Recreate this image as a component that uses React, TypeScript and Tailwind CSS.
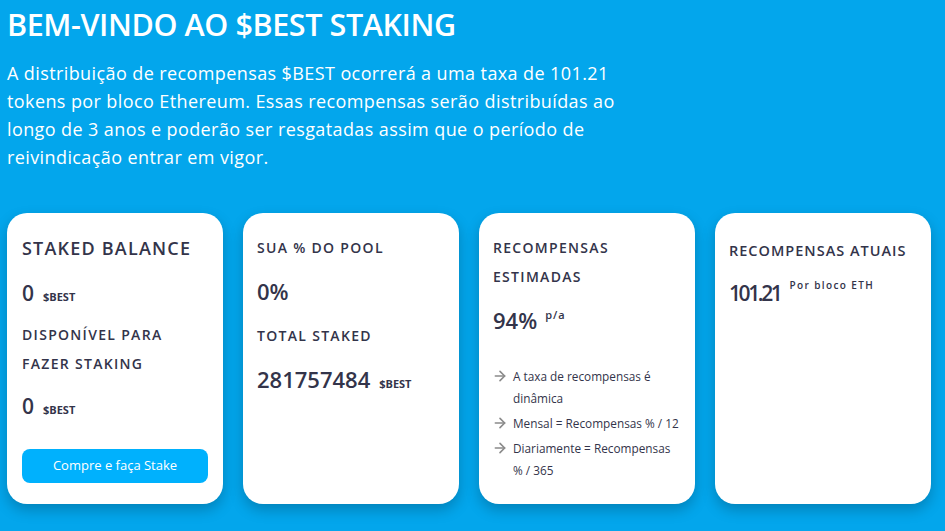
import React from "react";
import { ArrowRight } from "lucide-react";

const font = { fontFamily: '"Open Sans", "Noto Sans", sans-serif' };

function Best({ className = "" }: { className?: string }) {
  return <span className={"text-[11px] font-bold " + className}>$BEST</span>;
}

function Item({ children }: { children: React.ReactNode }) {
  return (
    <li className="flex items-start gap-[5px]">
      <ArrowRight className="mt-[3px] -ml-[1px] shrink-0 text-[#8a8a8a]" size={16} strokeWidth={2.4} />
      <span className="whitespace-nowrap">{children}</span>
    </li>
  );
}

export default function App() {
  return (
    <div
      className="w-[945px] h-[531px] overflow-hidden bg-[#03a6ec] px-[7px] text-white"
      style={font}
    >
      <h1 className="pt-[4px] text-[30.5px] leading-[40px] font-semibold tracking-[-0.4px]">
        BEM-VINDO AO $BEST STAKING
      </h1>
      <p className="mt-[15px] text-[18px] leading-[28px] tracking-[0.4px]">
        A distribuição de recompensas $BEST ocorrerá a uma taxa de 101.21
        <br />
        tokens por bloco Ethereum. Essas recompensas serão distribuídas ao
        <br />
        longo de 3 anos e poderão ser resgatadas assim que o período de
        <br />
        reivindicação entrar em vigor.
      </p>

      <div className="mt-[42px] flex gap-[20px] text-[#33344a]">
        {/* Card 1 */}
        <div className="w-[216px] h-[291px] shrink-0 rounded-[20px] bg-white px-[15px] pt-[21px] shadow-[0_6px_14px_rgba(0,0,0,0.22)] flex flex-col">
          <h3 className="text-[18px] leading-[29px] font-semibold tracking-[1.2px]">STAKED BALANCE</h3>
          <div className="mt-[16px] flex items-baseline leading-[29px]">
            <span className="text-[21px] font-semibold">0</span>
            <Best className="ml-[9px]" />
          </div>
          <h4 className="mt-[9px] text-[14px] leading-[29px] font-semibold tracking-[1.3px]">
            DISPONÍVEL PARA
            <br />
            FAZER STAKING
          </h4>
          <div className="mt-[14px] flex items-baseline leading-[29px]">
            <span className="text-[21px] font-semibold">0</span>
            <Best className="ml-[9px]" />
          </div>
          <button className="mt-[25px] h-[34px] w-full rounded-[8px] bg-[#00b1fd] text-[13px] text-white">
            Compre e faça Stake
          </button>
        </div>

        {/* Card 2 */}
        <div className="w-[216px] h-[291px] shrink-0 rounded-[20px] bg-white px-[14px] pt-[20px] shadow-[0_6px_14px_rgba(0,0,0,0.22)] flex flex-col">
          <h3 className="text-[14px] leading-[29px] font-semibold tracking-[1.3px]">SUA % DO POOL</h3>
          <div className="mt-[15px] text-[22px] leading-[29px] font-semibold">0%</div>
          <h3 className="mt-[15px] text-[14px] leading-[29px] font-semibold tracking-[1.3px]">TOTAL STAKED</h3>
          <div className="mt-[15px] flex items-baseline leading-[29px]">
            <span className="text-[22px] font-semibold">281757484</span>
            <Best className="ml-[9px]" />
          </div>
        </div>

        {/* Card 3 */}
        <div className="w-[216px] h-[291px] shrink-0 rounded-[20px] bg-white px-[14px] pt-[20px] shadow-[0_6px_14px_rgba(0,0,0,0.22)] flex flex-col">
          <h3 className="text-[14px] leading-[29px] font-semibold tracking-[1.3px]">
            RECOMPENSAS
            <br />
            ESTIMADAS
          </h3>
          <div className="mt-[15px] flex items-start leading-[29px]">
            <span className="text-[22px] font-semibold">94%</span>
            <span className="ml-[8px] -mt-[6px] text-[11px] font-semibold tracking-[1px]">p/a</span>
          </div>
          <ul className="mt-[30px] flex flex-col gap-[3px] text-[11.8px] leading-[22px]">
            <Item>
              A taxa de recompensas é
              <br />
              dinâmica
            </Item>
            <Item>Mensal = Recompensas % / 12</Item>
            <Item>
              Diariamente = Recompensas
              <br />% / 365
            </Item>
          </ul>
        </div>

        {/* Card 4 */}
        <div className="w-[216px] h-[291px] shrink-0 rounded-[20px] bg-white px-[14px] pt-[23px] shadow-[0_6px_14px_rgba(0,0,0,0.22)] flex flex-col">
          <h3 className="text-[14.5px] leading-[29px] font-semibold tracking-[1px]">RECOMPENSAS ATUAIS</h3>
          <div className="mt-[12px] flex items-start">
            <span className="text-[21px] leading-[32px] font-semibold tracking-[-2.4px]">101.21</span>
            <span className="ml-[9px] mt-[-1px] text-[10px] leading-[18px] font-semibold tracking-[1.4px]">Por bloco ETH</span>
          </div>
        </div>
      </div>
    </div>
  );
}
